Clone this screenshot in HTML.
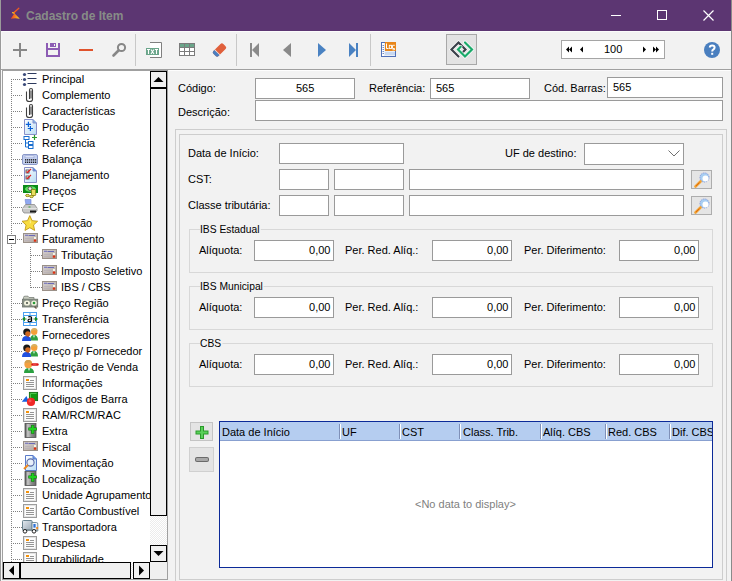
<!DOCTYPE html>
<html><head><meta charset="utf-8">
<style>
html,body{margin:0;padding:0;width:732px;height:581px;overflow:hidden;background:#f2f2f2;}
body{position:relative;font-family:"Liberation Sans",sans-serif;font-size:11px;color:#000;}
.a{position:absolute;}
.t{position:absolute;white-space:nowrap;font-size:11px;line-height:13px;}
.box{position:absolute;box-sizing:border-box;background:#fff;border:1px solid #9a9a9a;}
.gl{position:absolute;box-sizing:border-box;border:1px solid #d8d8d8;}
svg{position:absolute;overflow:visible;}
</style></head><body>

<!-- title bar -->
<div class="a" style="left:0;top:0;width:732px;height:31px;background:#5c3672;"></div>
<div class="a" style="left:0;top:0;width:1px;height:581px;background:#9a9a9a;"></div>
<div class="a" style="left:731px;top:0;width:1px;height:581px;background:#8a8a8a;"></div>
<svg style="left:0;top:0" width="40" height="31">
  <defs><linearGradient id="tg" gradientUnits="userSpaceOnUse" x1="12" y1="16" x2="19" y2="17"><stop offset="0" stop-color="#f04a20"/><stop offset="1" stop-color="#f8c420"/></linearGradient></defs>
  <path d="M19 8 L13.2 12.2 L12.6 12.8 L14.2 13.4 L10.8 18.8 Q15 17.6 19.8 18.8 L15.4 14.2 L13.9 12.8 Z" fill="url(#tg)"/>
  <path d="M18.8 8.3 L14.2 12.6" stroke="#f05a20" stroke-width="1.3" stroke-linecap="round"/>
  <path d="M12.6 12.6 L14 13.2" stroke="#f8c020" stroke-width="1.2" stroke-linecap="round"/>
</svg>
<div class="t" style="left:26px;top:10px;font-size:12px;font-weight:bold;color:#878c87;">Cadastro de Item</div>
<div class="a" style="left:611px;top:15px;width:10px;height:1px;background:#fff;"></div>
<div class="a" style="left:657px;top:10px;width:10px;height:10px;box-sizing:border-box;border:1px solid #fff;"></div>
<svg style="left:0;top:0" width="732" height="31">
  <path d="M703.5 10.5 L713.5 20.5 M713.5 10.5 L703.5 20.5" stroke="#fff" stroke-width="1.2"/>
</svg>

<!-- toolbar -->
<div class="a" style="left:1px;top:31px;width:730px;height:1px;background:#fbfbfb;"></div>
<div class="a" style="left:1px;top:69px;width:730px;height:1px;background:#a0a0a0;"></div><div class="a" style="left:1px;top:70px;width:730px;height:1px;background:#fdfdfd;"></div><div class="a" style="left:1px;top:31px;width:1px;height:38px;background:#f8f8f8;"></div><div class="a" style="left:1px;top:71px;width:1px;height:510px;background:#f8f8f8;"></div>
<svg style="left:0;top:0" width="732" height="70">
  <!-- plus -->
  <path d="M13 50 H27 M20 43 V57" stroke="#878787" stroke-width="2"/>
  <!-- save -->
  <rect x="46" y="43" width="2" height="14" fill="#8c5cb4"/>
  <rect x="58" y="43" width="2" height="14" fill="#8c5cb4"/>
  <rect x="46" y="48" width="14" height="2" fill="#8c5cb4"/>
  <rect x="46" y="55" width="14" height="2" fill="#8c5cb4"/>
  <rect x="50" y="43" width="6" height="4" fill="#8c5cb4"/>
  <rect x="54" y="44" width="1" height="2" fill="#f4f4f4"/>
  <!-- minus -->
  <rect x="79" y="49" width="14" height="2" fill="#e0532c"/>
  <!-- search -->
  <circle cx="121.5" cy="47.5" r="3.6" fill="none" stroke="#878787" stroke-width="2"/>
  <path d="M118.5 50.5 L113.5 55.5" stroke="#878787" stroke-width="2.6" stroke-linecap="round"/>
  <!-- sep -->
  <rect x="135" y="34" width="1" height="32" fill="#c8c8c8"/>
  <!-- TXT -->
  <path d="M150 42.5 H161.5 V57.5 H150" fill="#fff" stroke="#808080"/>
  <rect x="150" y="43" width="11" height="14" fill="#fff"/>
  <rect x="146" y="48" width="13" height="7" fill="#6aa58a"/>
  <path d="M147 49.5 H150 M148.5 49.5 V54 M151 49.5 L154 54 M154 49.5 L151 54 M155 49.5 H158 M156.5 49.5 V54" stroke="#fff" stroke-width="1.1"/>
  <!-- grid -->
  <rect x="179" y="43" width="16" height="13" fill="#7b7b7b"/>
  <rect x="180" y="44" width="4" height="3" fill="#6aa58a"/><rect x="185" y="44" width="4" height="3" fill="#6aa58a"/><rect x="190" y="44" width="4" height="3" fill="#6aa58a"/>
  <rect x="180" y="48" width="4" height="3" fill="#fff"/><rect x="185" y="48" width="4" height="3" fill="#fff"/><rect x="190" y="48" width="4" height="3" fill="#fff"/>
  <rect x="180" y="52" width="4" height="3" fill="#fff"/><rect x="185" y="52" width="4" height="3" fill="#fff"/><rect x="190" y="52" width="4" height="3" fill="#fff"/>
  <!-- eraser -->
  <g transform="translate(219.5,50) rotate(-45)">
    <rect x="-7" y="-3.6" width="14" height="7.2" rx="2" fill="#e0603c"/>
    <path d="M-7 -1.6 Q-7 -3.6 -5 -3.6 H-3.5 V3.6 H-5 Q-7 3.6 -7 1.6 Z" fill="#4a7fc0"/>
    <rect x="-3.5" y="-3.6" width="0.7" height="7.2" fill="#f2f2f2"/>
  </g>
  <!-- sep -->
  <rect x="236" y="34" width="1" height="32" fill="#c8c8c8"/>
  <!-- nav -->
  <rect x="250" y="43" width="2" height="14" fill="#8a8a8a"/>
  <path d="M259 43 V57 L252 50 Z" fill="#8a8a8a"/>
  <path d="M291 43 V57 L283 50 Z" fill="#8a8a8a"/>
  <path d="M318 43 V57 L326 50 Z" fill="#4a82c2"/>
  <path d="M349 43 V57 L356 50 Z" fill="#4a82c2"/>
  <rect x="356" y="43" width="2" height="14" fill="#4a82c2"/>
  <!-- sep -->
  <rect x="370" y="34" width="1" height="32" fill="#c8c8c8"/>
  <!-- log -->
  <rect x="381.5" y="42.5" width="14" height="14" fill="#e8eef8" stroke="#5070b8"/>
  <rect x="382" y="43" width="2" height="13" fill="#fff"/>
  <path d="M382.5 45.5 H384 M382.5 47.5 H384 M382.5 49.5 H384 M382.5 51.5 H384 M382.5 53.5 H384" stroke="#5070b8" stroke-width="0.8"/>
  <rect x="385" y="52" width="10" height="3" fill="#c8d8f0"/>
  <rect x="385" y="42" width="11" height="9" fill="#e8861a"/>
  <path d="M386.5 43.5 V48.5 H388.5" fill="none" stroke="#fff" stroke-width="1"/>
  <rect x="389.3" y="45.3" width="2.2" height="3.2" fill="none" stroke="#fff" stroke-width="0.9"/>
  <path d="M394.8 45.3 H392.5 V48.5 H394.5 V49.8 H392.5" fill="none" stroke="#fff" stroke-width="0.9"/>
  <!-- pressed button -->
  <rect x="446.5" y="34.5" width="30" height="30" fill="#e3e3e3" stroke="#a8a8a8"/>
  <path d="M462.8 52.2 L465.5 49.5 L458.5 42.5 L451.5 49.5 L458.5 56.5" fill="none" stroke="#fff" stroke-width="3.6" stroke-linecap="round" opacity="0.9"/>
  <path d="M462.8 52.2 L465.5 49.5 L458.5 42.5 L451.5 49.5 L458.5 56.5" fill="none" stroke="#3b404a" stroke-width="2.2" stroke-linecap="round"/>
  <path d="M460.7 46.8 L458 49.5 L465 56.5 L472 49.5 L465 42.5" fill="none" stroke="#fff" stroke-width="3.6" stroke-linecap="round" opacity="0.9"/>
  <path d="M460.7 46.8 L458 49.5 L465 56.5 L472 49.5 L465 42.5" fill="none" stroke="#1aaa6a" stroke-width="2.2" stroke-linecap="round"/>
  <!-- record nav -->
  <rect x="561.5" y="40.5" width="103" height="18" fill="#fff" stroke="#a5a5a5"/>
  <path d="M566 49.5 L569 46.5 V52.5 Z M569 49.5 L572 46.5 V52.5 Z" fill="#000"/>
  <path d="M580 49.5 L583 46.5 V52.5 Z" fill="#000"/>
  <path d="M646 49.5 L643 46.5 V52.5 Z" fill="#000"/>
  <path d="M656 49.5 L653 46.5 V52.5 Z M659 49.5 L656 46.5 V52.5 Z" fill="#000"/>
  <!-- help -->
  <circle cx="712" cy="50" r="8" fill="#4a7fbf"/>
  <path d="M709.8 47.6 Q709.8 45.6 712.2 45.6 Q714.6 45.6 714.6 47.6 Q714.6 48.9 713.2 49.6 Q712.2 50.1 712.2 51.6" fill="none" stroke="#fff" stroke-width="2"/>
  <rect x="711.2" y="52.8" width="2" height="2" fill="#fff"/>
</svg>
<div class="t" style="left:604px;top:43px;">100</div>

<!-- tree panel -->
<div class="a" style="left:2px;top:70px;width:166px;height:510px;box-sizing:border-box;border:1px solid #a0a0a0;background:#fff;"></div>
<div class="a" style="left:3px;top:71px;width:147px;height:491px;overflow:hidden;">
<svg style="left:0;top:0" width="147" height="500">
<rect x="8" y="8" width="1" height="1" fill="#808080"/><rect x="8" y="10" width="1" height="1" fill="#808080"/><rect x="8" y="12" width="1" height="1" fill="#808080"/><rect x="8" y="14" width="1" height="1" fill="#808080"/><rect x="8" y="16" width="1" height="1" fill="#808080"/><rect x="8" y="18" width="1" height="1" fill="#808080"/><rect x="8" y="20" width="1" height="1" fill="#808080"/><rect x="8" y="22" width="1" height="1" fill="#808080"/><rect x="8" y="24" width="1" height="1" fill="#808080"/><rect x="8" y="26" width="1" height="1" fill="#808080"/><rect x="8" y="28" width="1" height="1" fill="#808080"/><rect x="8" y="30" width="1" height="1" fill="#808080"/><rect x="8" y="32" width="1" height="1" fill="#808080"/><rect x="8" y="34" width="1" height="1" fill="#808080"/><rect x="8" y="36" width="1" height="1" fill="#808080"/><rect x="8" y="38" width="1" height="1" fill="#808080"/><rect x="8" y="40" width="1" height="1" fill="#808080"/><rect x="8" y="42" width="1" height="1" fill="#808080"/><rect x="8" y="44" width="1" height="1" fill="#808080"/><rect x="8" y="46" width="1" height="1" fill="#808080"/><rect x="8" y="48" width="1" height="1" fill="#808080"/><rect x="8" y="50" width="1" height="1" fill="#808080"/><rect x="8" y="52" width="1" height="1" fill="#808080"/><rect x="8" y="54" width="1" height="1" fill="#808080"/><rect x="8" y="56" width="1" height="1" fill="#808080"/><rect x="8" y="58" width="1" height="1" fill="#808080"/><rect x="8" y="60" width="1" height="1" fill="#808080"/><rect x="8" y="62" width="1" height="1" fill="#808080"/><rect x="8" y="64" width="1" height="1" fill="#808080"/><rect x="8" y="66" width="1" height="1" fill="#808080"/><rect x="8" y="68" width="1" height="1" fill="#808080"/><rect x="8" y="70" width="1" height="1" fill="#808080"/><rect x="8" y="72" width="1" height="1" fill="#808080"/><rect x="8" y="74" width="1" height="1" fill="#808080"/><rect x="8" y="76" width="1" height="1" fill="#808080"/><rect x="8" y="78" width="1" height="1" fill="#808080"/><rect x="8" y="80" width="1" height="1" fill="#808080"/><rect x="8" y="82" width="1" height="1" fill="#808080"/><rect x="8" y="84" width="1" height="1" fill="#808080"/><rect x="8" y="86" width="1" height="1" fill="#808080"/><rect x="8" y="88" width="1" height="1" fill="#808080"/><rect x="8" y="90" width="1" height="1" fill="#808080"/><rect x="8" y="92" width="1" height="1" fill="#808080"/><rect x="8" y="94" width="1" height="1" fill="#808080"/><rect x="8" y="96" width="1" height="1" fill="#808080"/><rect x="8" y="98" width="1" height="1" fill="#808080"/><rect x="8" y="100" width="1" height="1" fill="#808080"/><rect x="8" y="102" width="1" height="1" fill="#808080"/><rect x="8" y="104" width="1" height="1" fill="#808080"/><rect x="8" y="106" width="1" height="1" fill="#808080"/><rect x="8" y="108" width="1" height="1" fill="#808080"/><rect x="8" y="110" width="1" height="1" fill="#808080"/><rect x="8" y="112" width="1" height="1" fill="#808080"/><rect x="8" y="114" width="1" height="1" fill="#808080"/><rect x="8" y="116" width="1" height="1" fill="#808080"/><rect x="8" y="118" width="1" height="1" fill="#808080"/><rect x="8" y="120" width="1" height="1" fill="#808080"/><rect x="8" y="122" width="1" height="1" fill="#808080"/><rect x="8" y="124" width="1" height="1" fill="#808080"/><rect x="8" y="126" width="1" height="1" fill="#808080"/><rect x="8" y="128" width="1" height="1" fill="#808080"/><rect x="8" y="130" width="1" height="1" fill="#808080"/><rect x="8" y="132" width="1" height="1" fill="#808080"/><rect x="8" y="134" width="1" height="1" fill="#808080"/><rect x="8" y="136" width="1" height="1" fill="#808080"/><rect x="8" y="138" width="1" height="1" fill="#808080"/><rect x="8" y="140" width="1" height="1" fill="#808080"/><rect x="8" y="142" width="1" height="1" fill="#808080"/><rect x="8" y="144" width="1" height="1" fill="#808080"/><rect x="8" y="146" width="1" height="1" fill="#808080"/><rect x="8" y="148" width="1" height="1" fill="#808080"/><rect x="8" y="150" width="1" height="1" fill="#808080"/><rect x="8" y="152" width="1" height="1" fill="#808080"/><rect x="8" y="154" width="1" height="1" fill="#808080"/><rect x="8" y="156" width="1" height="1" fill="#808080"/><rect x="8" y="158" width="1" height="1" fill="#808080"/><rect x="8" y="160" width="1" height="1" fill="#808080"/><rect x="8" y="162" width="1" height="1" fill="#808080"/><rect x="8" y="164" width="1" height="1" fill="#808080"/><rect x="8" y="166" width="1" height="1" fill="#808080"/><rect x="8" y="168" width="1" height="1" fill="#808080"/><rect x="8" y="170" width="1" height="1" fill="#808080"/><rect x="8" y="172" width="1" height="1" fill="#808080"/><rect x="8" y="174" width="1" height="1" fill="#808080"/><rect x="8" y="176" width="1" height="1" fill="#808080"/><rect x="8" y="178" width="1" height="1" fill="#808080"/><rect x="8" y="180" width="1" height="1" fill="#808080"/><rect x="8" y="182" width="1" height="1" fill="#808080"/><rect x="8" y="184" width="1" height="1" fill="#808080"/><rect x="8" y="186" width="1" height="1" fill="#808080"/><rect x="8" y="188" width="1" height="1" fill="#808080"/><rect x="8" y="190" width="1" height="1" fill="#808080"/><rect x="8" y="192" width="1" height="1" fill="#808080"/><rect x="8" y="194" width="1" height="1" fill="#808080"/><rect x="8" y="196" width="1" height="1" fill="#808080"/><rect x="8" y="198" width="1" height="1" fill="#808080"/><rect x="8" y="200" width="1" height="1" fill="#808080"/><rect x="8" y="202" width="1" height="1" fill="#808080"/><rect x="8" y="204" width="1" height="1" fill="#808080"/><rect x="8" y="206" width="1" height="1" fill="#808080"/><rect x="8" y="208" width="1" height="1" fill="#808080"/><rect x="8" y="210" width="1" height="1" fill="#808080"/><rect x="8" y="212" width="1" height="1" fill="#808080"/><rect x="8" y="214" width="1" height="1" fill="#808080"/><rect x="8" y="216" width="1" height="1" fill="#808080"/><rect x="8" y="218" width="1" height="1" fill="#808080"/><rect x="8" y="220" width="1" height="1" fill="#808080"/><rect x="8" y="222" width="1" height="1" fill="#808080"/><rect x="8" y="224" width="1" height="1" fill="#808080"/><rect x="8" y="226" width="1" height="1" fill="#808080"/><rect x="8" y="228" width="1" height="1" fill="#808080"/><rect x="8" y="230" width="1" height="1" fill="#808080"/><rect x="8" y="232" width="1" height="1" fill="#808080"/><rect x="8" y="234" width="1" height="1" fill="#808080"/><rect x="8" y="236" width="1" height="1" fill="#808080"/><rect x="8" y="238" width="1" height="1" fill="#808080"/><rect x="8" y="240" width="1" height="1" fill="#808080"/><rect x="8" y="242" width="1" height="1" fill="#808080"/><rect x="8" y="244" width="1" height="1" fill="#808080"/><rect x="8" y="246" width="1" height="1" fill="#808080"/><rect x="8" y="248" width="1" height="1" fill="#808080"/><rect x="8" y="250" width="1" height="1" fill="#808080"/><rect x="8" y="252" width="1" height="1" fill="#808080"/><rect x="8" y="254" width="1" height="1" fill="#808080"/><rect x="8" y="256" width="1" height="1" fill="#808080"/><rect x="8" y="258" width="1" height="1" fill="#808080"/><rect x="8" y="260" width="1" height="1" fill="#808080"/><rect x="8" y="262" width="1" height="1" fill="#808080"/><rect x="8" y="264" width="1" height="1" fill="#808080"/><rect x="8" y="266" width="1" height="1" fill="#808080"/><rect x="8" y="268" width="1" height="1" fill="#808080"/><rect x="8" y="270" width="1" height="1" fill="#808080"/><rect x="8" y="272" width="1" height="1" fill="#808080"/><rect x="8" y="274" width="1" height="1" fill="#808080"/><rect x="8" y="276" width="1" height="1" fill="#808080"/><rect x="8" y="278" width="1" height="1" fill="#808080"/><rect x="8" y="280" width="1" height="1" fill="#808080"/><rect x="8" y="282" width="1" height="1" fill="#808080"/><rect x="8" y="284" width="1" height="1" fill="#808080"/><rect x="8" y="286" width="1" height="1" fill="#808080"/><rect x="8" y="288" width="1" height="1" fill="#808080"/><rect x="8" y="290" width="1" height="1" fill="#808080"/><rect x="8" y="292" width="1" height="1" fill="#808080"/><rect x="8" y="294" width="1" height="1" fill="#808080"/><rect x="8" y="296" width="1" height="1" fill="#808080"/><rect x="8" y="298" width="1" height="1" fill="#808080"/><rect x="8" y="300" width="1" height="1" fill="#808080"/><rect x="8" y="302" width="1" height="1" fill="#808080"/><rect x="8" y="304" width="1" height="1" fill="#808080"/><rect x="8" y="306" width="1" height="1" fill="#808080"/><rect x="8" y="308" width="1" height="1" fill="#808080"/><rect x="8" y="310" width="1" height="1" fill="#808080"/><rect x="8" y="312" width="1" height="1" fill="#808080"/><rect x="8" y="314" width="1" height="1" fill="#808080"/><rect x="8" y="316" width="1" height="1" fill="#808080"/><rect x="8" y="318" width="1" height="1" fill="#808080"/><rect x="8" y="320" width="1" height="1" fill="#808080"/><rect x="8" y="322" width="1" height="1" fill="#808080"/><rect x="8" y="324" width="1" height="1" fill="#808080"/><rect x="8" y="326" width="1" height="1" fill="#808080"/><rect x="8" y="328" width="1" height="1" fill="#808080"/><rect x="8" y="330" width="1" height="1" fill="#808080"/><rect x="8" y="332" width="1" height="1" fill="#808080"/><rect x="8" y="334" width="1" height="1" fill="#808080"/><rect x="8" y="336" width="1" height="1" fill="#808080"/><rect x="8" y="338" width="1" height="1" fill="#808080"/><rect x="8" y="340" width="1" height="1" fill="#808080"/><rect x="8" y="342" width="1" height="1" fill="#808080"/><rect x="8" y="344" width="1" height="1" fill="#808080"/><rect x="8" y="346" width="1" height="1" fill="#808080"/><rect x="8" y="348" width="1" height="1" fill="#808080"/><rect x="8" y="350" width="1" height="1" fill="#808080"/><rect x="8" y="352" width="1" height="1" fill="#808080"/><rect x="8" y="354" width="1" height="1" fill="#808080"/><rect x="8" y="356" width="1" height="1" fill="#808080"/><rect x="8" y="358" width="1" height="1" fill="#808080"/><rect x="8" y="360" width="1" height="1" fill="#808080"/><rect x="8" y="362" width="1" height="1" fill="#808080"/><rect x="8" y="364" width="1" height="1" fill="#808080"/><rect x="8" y="366" width="1" height="1" fill="#808080"/><rect x="8" y="368" width="1" height="1" fill="#808080"/><rect x="8" y="370" width="1" height="1" fill="#808080"/><rect x="8" y="372" width="1" height="1" fill="#808080"/><rect x="8" y="374" width="1" height="1" fill="#808080"/><rect x="8" y="376" width="1" height="1" fill="#808080"/><rect x="8" y="378" width="1" height="1" fill="#808080"/><rect x="8" y="380" width="1" height="1" fill="#808080"/><rect x="8" y="382" width="1" height="1" fill="#808080"/><rect x="8" y="384" width="1" height="1" fill="#808080"/><rect x="8" y="386" width="1" height="1" fill="#808080"/><rect x="8" y="388" width="1" height="1" fill="#808080"/><rect x="8" y="390" width="1" height="1" fill="#808080"/><rect x="8" y="392" width="1" height="1" fill="#808080"/><rect x="8" y="394" width="1" height="1" fill="#808080"/><rect x="8" y="396" width="1" height="1" fill="#808080"/><rect x="8" y="398" width="1" height="1" fill="#808080"/><rect x="8" y="400" width="1" height="1" fill="#808080"/><rect x="8" y="402" width="1" height="1" fill="#808080"/><rect x="8" y="404" width="1" height="1" fill="#808080"/><rect x="8" y="406" width="1" height="1" fill="#808080"/><rect x="8" y="408" width="1" height="1" fill="#808080"/><rect x="8" y="410" width="1" height="1" fill="#808080"/><rect x="8" y="412" width="1" height="1" fill="#808080"/><rect x="8" y="414" width="1" height="1" fill="#808080"/><rect x="8" y="416" width="1" height="1" fill="#808080"/><rect x="8" y="418" width="1" height="1" fill="#808080"/><rect x="8" y="420" width="1" height="1" fill="#808080"/><rect x="8" y="422" width="1" height="1" fill="#808080"/><rect x="8" y="424" width="1" height="1" fill="#808080"/><rect x="8" y="426" width="1" height="1" fill="#808080"/><rect x="8" y="428" width="1" height="1" fill="#808080"/><rect x="8" y="430" width="1" height="1" fill="#808080"/><rect x="8" y="432" width="1" height="1" fill="#808080"/><rect x="8" y="434" width="1" height="1" fill="#808080"/><rect x="8" y="436" width="1" height="1" fill="#808080"/><rect x="8" y="438" width="1" height="1" fill="#808080"/><rect x="8" y="440" width="1" height="1" fill="#808080"/><rect x="8" y="442" width="1" height="1" fill="#808080"/><rect x="8" y="444" width="1" height="1" fill="#808080"/><rect x="8" y="446" width="1" height="1" fill="#808080"/><rect x="8" y="448" width="1" height="1" fill="#808080"/><rect x="8" y="450" width="1" height="1" fill="#808080"/><rect x="8" y="452" width="1" height="1" fill="#808080"/><rect x="8" y="454" width="1" height="1" fill="#808080"/><rect x="8" y="456" width="1" height="1" fill="#808080"/><rect x="8" y="458" width="1" height="1" fill="#808080"/><rect x="8" y="460" width="1" height="1" fill="#808080"/><rect x="8" y="462" width="1" height="1" fill="#808080"/><rect x="8" y="464" width="1" height="1" fill="#808080"/><rect x="8" y="466" width="1" height="1" fill="#808080"/><rect x="8" y="468" width="1" height="1" fill="#808080"/><rect x="8" y="470" width="1" height="1" fill="#808080"/><rect x="8" y="472" width="1" height="1" fill="#808080"/><rect x="8" y="474" width="1" height="1" fill="#808080"/><rect x="8" y="476" width="1" height="1" fill="#808080"/><rect x="8" y="478" width="1" height="1" fill="#808080"/><rect x="8" y="480" width="1" height="1" fill="#808080"/><rect x="8" y="482" width="1" height="1" fill="#808080"/><rect x="8" y="484" width="1" height="1" fill="#808080"/><rect x="8" y="486" width="1" height="1" fill="#808080"/><rect x="8" y="488" width="1" height="1" fill="#808080"/><rect x="8" y="490" width="1" height="1" fill="#808080"/>
<rect x="10" y="8" width="1" height="1" fill="#808080"/><rect x="12" y="8" width="1" height="1" fill="#808080"/><rect x="14" y="8" width="1" height="1" fill="#808080"/><rect x="16" y="8" width="1" height="1" fill="#808080"/><rect x="18" y="8" width="1" height="1" fill="#808080"/>
<rect x="10" y="24" width="1" height="1" fill="#808080"/><rect x="12" y="24" width="1" height="1" fill="#808080"/><rect x="14" y="24" width="1" height="1" fill="#808080"/><rect x="16" y="24" width="1" height="1" fill="#808080"/><rect x="18" y="24" width="1" height="1" fill="#808080"/>
<rect x="10" y="40" width="1" height="1" fill="#808080"/><rect x="12" y="40" width="1" height="1" fill="#808080"/><rect x="14" y="40" width="1" height="1" fill="#808080"/><rect x="16" y="40" width="1" height="1" fill="#808080"/><rect x="18" y="40" width="1" height="1" fill="#808080"/>
<rect x="10" y="56" width="1" height="1" fill="#808080"/><rect x="12" y="56" width="1" height="1" fill="#808080"/><rect x="14" y="56" width="1" height="1" fill="#808080"/><rect x="16" y="56" width="1" height="1" fill="#808080"/><rect x="18" y="56" width="1" height="1" fill="#808080"/>
<rect x="10" y="72" width="1" height="1" fill="#808080"/><rect x="12" y="72" width="1" height="1" fill="#808080"/><rect x="14" y="72" width="1" height="1" fill="#808080"/><rect x="16" y="72" width="1" height="1" fill="#808080"/><rect x="18" y="72" width="1" height="1" fill="#808080"/>
<rect x="10" y="88" width="1" height="1" fill="#808080"/><rect x="12" y="88" width="1" height="1" fill="#808080"/><rect x="14" y="88" width="1" height="1" fill="#808080"/><rect x="16" y="88" width="1" height="1" fill="#808080"/><rect x="18" y="88" width="1" height="1" fill="#808080"/>
<rect x="10" y="104" width="1" height="1" fill="#808080"/><rect x="12" y="104" width="1" height="1" fill="#808080"/><rect x="14" y="104" width="1" height="1" fill="#808080"/><rect x="16" y="104" width="1" height="1" fill="#808080"/><rect x="18" y="104" width="1" height="1" fill="#808080"/>
<rect x="10" y="120" width="1" height="1" fill="#808080"/><rect x="12" y="120" width="1" height="1" fill="#808080"/><rect x="14" y="120" width="1" height="1" fill="#808080"/><rect x="16" y="120" width="1" height="1" fill="#808080"/><rect x="18" y="120" width="1" height="1" fill="#808080"/>
<rect x="10" y="136" width="1" height="1" fill="#808080"/><rect x="12" y="136" width="1" height="1" fill="#808080"/><rect x="14" y="136" width="1" height="1" fill="#808080"/><rect x="16" y="136" width="1" height="1" fill="#808080"/><rect x="18" y="136" width="1" height="1" fill="#808080"/>
<rect x="10" y="152" width="1" height="1" fill="#808080"/><rect x="12" y="152" width="1" height="1" fill="#808080"/><rect x="14" y="152" width="1" height="1" fill="#808080"/><rect x="16" y="152" width="1" height="1" fill="#808080"/><rect x="18" y="152" width="1" height="1" fill="#808080"/>
<rect x="14" y="168" width="1" height="1" fill="#808080"/><rect x="16" y="168" width="1" height="1" fill="#808080"/><rect x="18" y="168" width="1" height="1" fill="#808080"/>
<rect x="28" y="184" width="1" height="1" fill="#808080"/><rect x="30" y="184" width="1" height="1" fill="#808080"/><rect x="32" y="184" width="1" height="1" fill="#808080"/><rect x="34" y="184" width="1" height="1" fill="#808080"/><rect x="36" y="184" width="1" height="1" fill="#808080"/><rect x="38" y="184" width="1" height="1" fill="#808080"/>
<rect x="28" y="200" width="1" height="1" fill="#808080"/><rect x="30" y="200" width="1" height="1" fill="#808080"/><rect x="32" y="200" width="1" height="1" fill="#808080"/><rect x="34" y="200" width="1" height="1" fill="#808080"/><rect x="36" y="200" width="1" height="1" fill="#808080"/><rect x="38" y="200" width="1" height="1" fill="#808080"/>
<rect x="28" y="216" width="1" height="1" fill="#808080"/><rect x="30" y="216" width="1" height="1" fill="#808080"/><rect x="32" y="216" width="1" height="1" fill="#808080"/><rect x="34" y="216" width="1" height="1" fill="#808080"/><rect x="36" y="216" width="1" height="1" fill="#808080"/><rect x="38" y="216" width="1" height="1" fill="#808080"/>
<rect x="10" y="232" width="1" height="1" fill="#808080"/><rect x="12" y="232" width="1" height="1" fill="#808080"/><rect x="14" y="232" width="1" height="1" fill="#808080"/><rect x="16" y="232" width="1" height="1" fill="#808080"/><rect x="18" y="232" width="1" height="1" fill="#808080"/>
<rect x="10" y="248" width="1" height="1" fill="#808080"/><rect x="12" y="248" width="1" height="1" fill="#808080"/><rect x="14" y="248" width="1" height="1" fill="#808080"/><rect x="16" y="248" width="1" height="1" fill="#808080"/><rect x="18" y="248" width="1" height="1" fill="#808080"/>
<rect x="10" y="264" width="1" height="1" fill="#808080"/><rect x="12" y="264" width="1" height="1" fill="#808080"/><rect x="14" y="264" width="1" height="1" fill="#808080"/><rect x="16" y="264" width="1" height="1" fill="#808080"/><rect x="18" y="264" width="1" height="1" fill="#808080"/>
<rect x="10" y="280" width="1" height="1" fill="#808080"/><rect x="12" y="280" width="1" height="1" fill="#808080"/><rect x="14" y="280" width="1" height="1" fill="#808080"/><rect x="16" y="280" width="1" height="1" fill="#808080"/><rect x="18" y="280" width="1" height="1" fill="#808080"/>
<rect x="10" y="296" width="1" height="1" fill="#808080"/><rect x="12" y="296" width="1" height="1" fill="#808080"/><rect x="14" y="296" width="1" height="1" fill="#808080"/><rect x="16" y="296" width="1" height="1" fill="#808080"/><rect x="18" y="296" width="1" height="1" fill="#808080"/>
<rect x="10" y="312" width="1" height="1" fill="#808080"/><rect x="12" y="312" width="1" height="1" fill="#808080"/><rect x="14" y="312" width="1" height="1" fill="#808080"/><rect x="16" y="312" width="1" height="1" fill="#808080"/><rect x="18" y="312" width="1" height="1" fill="#808080"/>
<rect x="10" y="328" width="1" height="1" fill="#808080"/><rect x="12" y="328" width="1" height="1" fill="#808080"/><rect x="14" y="328" width="1" height="1" fill="#808080"/><rect x="16" y="328" width="1" height="1" fill="#808080"/><rect x="18" y="328" width="1" height="1" fill="#808080"/>
<rect x="10" y="344" width="1" height="1" fill="#808080"/><rect x="12" y="344" width="1" height="1" fill="#808080"/><rect x="14" y="344" width="1" height="1" fill="#808080"/><rect x="16" y="344" width="1" height="1" fill="#808080"/><rect x="18" y="344" width="1" height="1" fill="#808080"/>
<rect x="10" y="360" width="1" height="1" fill="#808080"/><rect x="12" y="360" width="1" height="1" fill="#808080"/><rect x="14" y="360" width="1" height="1" fill="#808080"/><rect x="16" y="360" width="1" height="1" fill="#808080"/><rect x="18" y="360" width="1" height="1" fill="#808080"/>
<rect x="10" y="376" width="1" height="1" fill="#808080"/><rect x="12" y="376" width="1" height="1" fill="#808080"/><rect x="14" y="376" width="1" height="1" fill="#808080"/><rect x="16" y="376" width="1" height="1" fill="#808080"/><rect x="18" y="376" width="1" height="1" fill="#808080"/>
<rect x="10" y="392" width="1" height="1" fill="#808080"/><rect x="12" y="392" width="1" height="1" fill="#808080"/><rect x="14" y="392" width="1" height="1" fill="#808080"/><rect x="16" y="392" width="1" height="1" fill="#808080"/><rect x="18" y="392" width="1" height="1" fill="#808080"/>
<rect x="10" y="408" width="1" height="1" fill="#808080"/><rect x="12" y="408" width="1" height="1" fill="#808080"/><rect x="14" y="408" width="1" height="1" fill="#808080"/><rect x="16" y="408" width="1" height="1" fill="#808080"/><rect x="18" y="408" width="1" height="1" fill="#808080"/>
<rect x="10" y="424" width="1" height="1" fill="#808080"/><rect x="12" y="424" width="1" height="1" fill="#808080"/><rect x="14" y="424" width="1" height="1" fill="#808080"/><rect x="16" y="424" width="1" height="1" fill="#808080"/><rect x="18" y="424" width="1" height="1" fill="#808080"/>
<rect x="10" y="440" width="1" height="1" fill="#808080"/><rect x="12" y="440" width="1" height="1" fill="#808080"/><rect x="14" y="440" width="1" height="1" fill="#808080"/><rect x="16" y="440" width="1" height="1" fill="#808080"/><rect x="18" y="440" width="1" height="1" fill="#808080"/>
<rect x="10" y="456" width="1" height="1" fill="#808080"/><rect x="12" y="456" width="1" height="1" fill="#808080"/><rect x="14" y="456" width="1" height="1" fill="#808080"/><rect x="16" y="456" width="1" height="1" fill="#808080"/><rect x="18" y="456" width="1" height="1" fill="#808080"/>
<rect x="10" y="472" width="1" height="1" fill="#808080"/><rect x="12" y="472" width="1" height="1" fill="#808080"/><rect x="14" y="472" width="1" height="1" fill="#808080"/><rect x="16" y="472" width="1" height="1" fill="#808080"/><rect x="18" y="472" width="1" height="1" fill="#808080"/>
<rect x="10" y="488" width="1" height="1" fill="#808080"/><rect x="12" y="488" width="1" height="1" fill="#808080"/><rect x="14" y="488" width="1" height="1" fill="#808080"/><rect x="16" y="488" width="1" height="1" fill="#808080"/><rect x="18" y="488" width="1" height="1" fill="#808080"/>
<rect x="27" y="176" width="1" height="1" fill="#808080"/><rect x="27" y="178" width="1" height="1" fill="#808080"/><rect x="27" y="180" width="1" height="1" fill="#808080"/><rect x="27" y="182" width="1" height="1" fill="#808080"/><rect x="27" y="184" width="1" height="1" fill="#808080"/><rect x="27" y="186" width="1" height="1" fill="#808080"/><rect x="27" y="188" width="1" height="1" fill="#808080"/><rect x="27" y="190" width="1" height="1" fill="#808080"/><rect x="27" y="192" width="1" height="1" fill="#808080"/><rect x="27" y="194" width="1" height="1" fill="#808080"/><rect x="27" y="196" width="1" height="1" fill="#808080"/><rect x="27" y="198" width="1" height="1" fill="#808080"/><rect x="27" y="200" width="1" height="1" fill="#808080"/><rect x="27" y="202" width="1" height="1" fill="#808080"/><rect x="27" y="204" width="1" height="1" fill="#808080"/><rect x="27" y="206" width="1" height="1" fill="#808080"/><rect x="27" y="208" width="1" height="1" fill="#808080"/><rect x="27" y="210" width="1" height="1" fill="#808080"/><rect x="27" y="212" width="1" height="1" fill="#808080"/><rect x="27" y="214" width="1" height="1" fill="#808080"/><rect x="27" y="216" width="1" height="1" fill="#808080"/>
<rect x="4.5" y="164.5" width="8" height="8" fill="#fff" stroke="#808080"/>
<rect x="6" y="168" width="5" height="1" fill="#000"/>
<g transform="translate(19,0)"><circle cx="2.5" cy="3.5" r="1.6" fill="#3a4a7a"/><circle cx="2.5" cy="8.5" r="1.6" fill="#3a4a7a"/><circle cx="2.5" cy="13.5" r="1.6" fill="#3a4a7a"/>
<path d="M5.5 2.5 H14.5 M5.5 7.5 H14.5 M5.5 12.5 H14.5" stroke="#2e3a5e" stroke-width="1"/></g>
<g transform="translate(19,16)"><path d="M4.5 4.5 V12.5 Q4.5 14.5 7.5 14.5 Q10.5 14.5 10.5 12.5 V3 Q10.5 1.5 9 1.5 Q7.5 1.5 7.5 3 V12 M9 3.5 V11.5" fill="none" stroke="#404040" stroke-width="1.1"/></g>
<g transform="translate(19,32)"><path d="M4.5 4.5 V12.5 Q4.5 14.5 7.5 14.5 Q10.5 14.5 10.5 12.5 V3 Q10.5 1.5 9 1.5 Q7.5 1.5 7.5 3 V12 M9 3.5 V11.5" fill="none" stroke="#404040" stroke-width="1.1"/></g>
<g transform="translate(19,48)"><defs><linearGradient id="pg" x1="0" y1="0" x2="1" y2="1"><stop offset="0" stop-color="#ffffff"/><stop offset="1" stop-color="#b8dcf4"/></linearGradient></defs><path d="M2.5 0.5 H11 L14.5 4 V15.5 H2.5 Z" fill="url(#pg)" stroke="#8890c8"/><path d="M11 0.5 V4 H14.5" fill="#7ab0e8" stroke="#8890c8"/>
<path d="M6.4 2.8 V8 M3.8 5.4 H9 M8.4 6.9 V12.1 M5.8 9.5 H11" stroke="#0a60d8" stroke-width="1.2"/></g>
<g transform="translate(19,64)"><path d="M3.5 4 V12 M3.5 8 H6.5 M3.5 12 H6.5" stroke="#1a6fd0"/><rect x="2" y="1.5" width="5" height="3" fill="#fff" stroke="#1a6fd0"/>
<rect x="6.5" y="6.5" width="4.5" height="3" fill="#fff" stroke="#1a6fd0"/><rect x="6.5" y="10.5" width="4.5" height="3" fill="#fff" stroke="#1a6fd0"/>
<path d="M12.5 0 V5 M10 2.5 H15" stroke="#2a9a2a" stroke-width="1.2"/></g>
<g transform="translate(19,80)"><rect x="0.5" y="3.5" width="15" height="10" rx="1.5" fill="#c4d0f0" stroke="#8a98c8"/><rect x="3" y="4.8" width="9" height="2" fill="#e4eafc" stroke="#98a4d0" stroke-width="0.6"/>
<rect x="3" y="8.2" width="1.3" height="1.3" fill="#101010"/><rect x="5" y="8.2" width="1.3" height="1.3" fill="#101010"/><rect x="7" y="8.2" width="1.3" height="1.3" fill="#101010"/><rect x="9" y="8.2" width="1.3" height="1.3" fill="#101010"/><rect x="11" y="8.2" width="1.3" height="1.3" fill="#101010"/><rect x="13" y="8.2" width="1.3" height="1.3" fill="#101010"/><rect x="3" y="10.6" width="1.3" height="1.3" fill="#101010"/><rect x="5" y="10.6" width="1.3" height="1.3" fill="#101010"/><rect x="7" y="10.6" width="1.3" height="1.3" fill="#101010"/><rect x="9" y="10.6" width="1.3" height="1.3" fill="#101010"/><rect x="11" y="10.6" width="1.3" height="1.3" fill="#101010"/><rect x="13" y="10.6" width="1.3" height="1.3" fill="#101010"/></g>
<g transform="translate(19,96)"><path d="M2.5 0.5 H11 L14.5 4 V15.5 H2.5 Z" fill="url(#pg)" stroke="#8890c8"/><path d="M11 0.5 V4 H14.5" fill="#4a80e0" stroke="#8890c8"/>
<rect x="4" y="3" width="3" height="3" fill="#fff" stroke="#444" stroke-width="0.8"/><rect x="4" y="9" width="3" height="3" fill="#fff" stroke="#444" stroke-width="0.8"/>
<path d="M4.5 4.5 L5.5 5.5 L9 2 M4.5 10.5 L5.5 11.5 L9 8" fill="none" stroke="#e02020" stroke-width="1.1"/></g>
<g transform="translate(19,112)"><rect x="1" y="2" width="15" height="8" fill="#0a8a1a"/><ellipse cx="8.5" cy="6" rx="5.5" ry="2.8" fill="#60e060"/><circle cx="8" cy="5.6" r="1.9" fill="#f0f0e0" stroke="#404040" stroke-width="0.8"/>
<rect x="9.5" y="6.5" width="4.2" height="6" rx="0.8" fill="#e8e060" stroke="#8a8010" stroke-width="0.9"/><ellipse cx="5.5" cy="12.5" rx="1.9" ry="1.1" fill="#e8e060" stroke="#8a8010" stroke-width="0.9"/><ellipse cx="9.5" cy="13.5" rx="1.9" ry="1.1" fill="#e8e060" stroke="#8a8010" stroke-width="0.9"/></g>
<g transform="translate(19,128)"><path d="M3 0.5 H9 V5.5 H4 Z" fill="#90a8f0" stroke="#6a80d0" stroke-width="0.6"/>
<path d="M0.5 9.5 L3.5 5.5 H12.5 L15 9 V12 L13 14 H2 L0.5 12 Z" fill="#c8c8c8" stroke="#808080" stroke-width="0.7"/>
<path d="M0.5 9.5 H15" stroke="#e8e8e8" stroke-width="0.8"/><rect x="8" y="11.5" width="6" height="2" fill="#181818"/><rect x="6.5" y="7.5" width="2" height="1" fill="#3aa03a"/></g>
<g transform="translate(19,144)"><path d="M7.80 0.60 L10.09 5.64 L15.60 6.27 L11.51 10.01 L12.62 15.43 L7.80 12.70 L2.98 15.43 L4.09 10.01 L0.00 6.27 L5.51 5.64 Z" fill="#f8dc40" stroke="#c09818" stroke-width="0.9" stroke-linejoin="round"/><path d="M7.8 3 L9 7.5 L7.8 9 Z" fill="#fff8c0" opacity="0.7"/></g>
<g transform="translate(19,160)"><defs><linearGradient id="cg" x1="0" y1="0" x2="1" y2="1"><stop offset="0" stop-color="#d8d4d8"/><stop offset="0.5" stop-color="#c4bcb8"/><stop offset="1" stop-color="#a8a098"/></linearGradient></defs>
<rect x="1" y="2" width="15" height="10" fill="url(#cg)"/><rect x="1.5" y="2.5" width="14" height="9" fill="none" stroke="#9a9088" stroke-width="1"/>
<path d="M3 4.3 H6 M6.5 4.5 H13" stroke="#6a6ab8" stroke-width="1.1"/><path d="M3 7.5 H10 M3 9.5 H9" stroke="#b8b0b8" stroke-width="0.7"/><rect x="12" y="6" width="2" height="2" fill="#f4f4e8"/><rect x="11.8" y="8.5" width="2.5" height="2.2" fill="#e03010"/></g>
<g transform="translate(38,176)"><defs><linearGradient id="cg" x1="0" y1="0" x2="1" y2="1"><stop offset="0" stop-color="#d8d4d8"/><stop offset="0.5" stop-color="#c4bcb8"/><stop offset="1" stop-color="#a8a098"/></linearGradient></defs>
<rect x="1" y="2" width="15" height="10" fill="url(#cg)"/><rect x="1.5" y="2.5" width="14" height="9" fill="none" stroke="#9a9088" stroke-width="1"/>
<path d="M3 4.3 H6 M6.5 4.5 H13" stroke="#6a6ab8" stroke-width="1.1"/><path d="M3 7.5 H10 M3 9.5 H9" stroke="#b8b0b8" stroke-width="0.7"/><rect x="12" y="6" width="2" height="2" fill="#f4f4e8"/><rect x="11.8" y="8.5" width="2.5" height="2.2" fill="#e03010"/></g>
<g transform="translate(38,192)"><defs><linearGradient id="cg" x1="0" y1="0" x2="1" y2="1"><stop offset="0" stop-color="#d8d4d8"/><stop offset="0.5" stop-color="#c4bcb8"/><stop offset="1" stop-color="#a8a098"/></linearGradient></defs>
<rect x="1" y="2" width="15" height="10" fill="url(#cg)"/><rect x="1.5" y="2.5" width="14" height="9" fill="none" stroke="#9a9088" stroke-width="1"/>
<path d="M3 4.3 H6 M6.5 4.5 H13" stroke="#6a6ab8" stroke-width="1.1"/><path d="M3 7.5 H10 M3 9.5 H9" stroke="#b8b0b8" stroke-width="0.7"/><rect x="12" y="6" width="2" height="2" fill="#f4f4e8"/><rect x="11.8" y="8.5" width="2.5" height="2.2" fill="#e03010"/></g>
<g transform="translate(38,208)"><defs><linearGradient id="cg" x1="0" y1="0" x2="1" y2="1"><stop offset="0" stop-color="#d8d4d8"/><stop offset="0.5" stop-color="#c4bcb8"/><stop offset="1" stop-color="#a8a098"/></linearGradient></defs>
<rect x="1" y="2" width="15" height="10" fill="url(#cg)"/><rect x="1.5" y="2.5" width="14" height="9" fill="none" stroke="#9a9088" stroke-width="1"/>
<path d="M3 4.3 H6 M6.5 4.5 H13" stroke="#6a6ab8" stroke-width="1.1"/><path d="M3 7.5 H10 M3 9.5 H9" stroke="#b8b0b8" stroke-width="0.7"/><rect x="12" y="6" width="2" height="2" fill="#f4f4e8"/><rect x="11.8" y="8.5" width="2.5" height="2.2" fill="#e03010"/></g>
<g transform="translate(19,224)"><path d="M1.5 4 V2.5 Q1.5 1.2 3 1.2 H6 L7 2.5 H12 V4" fill="#c8ccc0" stroke="#7a8078" stroke-width="0.8"/><rect x="0.5" y="4.2" width="15.2" height="7.8" fill="#8a9288" stroke="#6a7068" stroke-width="0.8"/>
<ellipse cx="5" cy="8" rx="3" ry="2.6" fill="#f4f4e0"/><circle cx="5" cy="8" r="1.1" fill="#505850"/><ellipse cx="12" cy="8" rx="2.8" ry="2.6" fill="#f4f4e0"/><circle cx="12" cy="8" r="1.3" fill="#2a9a3a"/>
<path d="M12.5 11.5 L14.5 13.5" stroke="#6a5a4a" stroke-width="1.4"/></g>
<g transform="translate(19,240)"><rect x="1.5" y="1.5" width="13" height="13" fill="#fff" stroke="#4aa0f0" stroke-width="1"/><path d="M1 4.5 H15 M1 11.5 H15 M8 1 V4.5 M8 11.5 V15" stroke="#4aa0f0"/>
<path d="M0 8 L3 5.5 V10.5 Z M16 8 L13 5.5 V10.5 Z" fill="#1a8a2a"/><path d="M2 8 H4.5 M11.5 8 H14" stroke="#1a8a2a" stroke-width="1.2"/>
<path d="M6.2 6 Q7.8 5.2 9.2 6 Q9.6 6.4 9.6 7 V10.8 M9.4 8 Q6 7.8 6 9.5 Q6 10.8 7.4 10.8 Q8.8 10.8 9.4 9.6" fill="none" stroke="#000" stroke-width="1.1"/></g>
<g transform="translate(19,256)"><path d="M8 13.5 Q8 8 12 8 Q16 8 16 13.5 Z" fill="#30a040"/><path d="M11 8.5 L12 11 L13 8.5 Z" fill="#e8f8e8"/><circle cx="12.2" cy="4.8" r="3.2" fill="#f4a038"/><path d="M9 4 Q9.5 0.8 12.5 1 Q15.5 1 15.5 4 Q13 2.5 9 4 Z" fill="#d8b060"/>
<path d="M0 14 Q0 9 4.5 9 Q9 9 9 14 Z" fill="#2050e0"/><circle cx="4.8" cy="5" r="3.6" fill="#181818"/><circle cx="5.8" cy="6.8" r="2.6" fill="#d06820"/><path d="M5 9.5 L6 10.5 L7 9.5 Z" fill="#a02010"/></g>
<g transform="translate(19,272)"><path d="M8 13.5 Q8 8 12 8 Q16 8 16 13.5 Z" fill="#30a040"/><path d="M11 8.5 L12 11 L13 8.5 Z" fill="#e8f8e8"/><circle cx="12.2" cy="4.8" r="3.2" fill="#f4a038"/><path d="M9 4 Q9.5 0.8 12.5 1 Q15.5 1 15.5 4 Q13 2.5 9 4 Z" fill="#d8b060"/>
<path d="M0 14 Q0 9 4.5 9 Q9 9 9 14 Z" fill="#2050e0"/><circle cx="4.8" cy="5" r="3.6" fill="#181818"/><circle cx="5.8" cy="6.8" r="2.6" fill="#d06820"/><path d="M5 9.5 L6 10.5 L7 9.5 Z" fill="#a02010"/></g>
<g transform="translate(19,288)"><path d="M2 14 Q2 9 7 9 Q12 9 12 14 Z" fill="#2aa040"/><path d="M6 9.2 L7 12 L8 9.2 Z" fill="#f4fff4"/>
<ellipse cx="6.3" cy="5.2" rx="3.9" ry="4.1" fill="#f4a040"/><path d="M2.6 4.5 Q2.8 1 6.3 1 Q9.8 1 10 4.5 Q7 2.6 2.6 4.5 Z" fill="#d0a050"/>
<path d="M10.5 5.5 H15.5" stroke="#d81818" stroke-width="2.4" stroke-linecap="round"/><path d="M11 5.3 H14.5" stroke="#ff6060" stroke-width="0.7"/></g>
<g transform="translate(19,304)"><rect x="1.5" y="1.5" width="13" height="13" fill="#fcfcfc" stroke="#9c9c9c"/><rect x="2.5" y="2.5" width="11" height="11" fill="none" stroke="#e4e4e4" stroke-width="1"/><rect x="4" y="4" width="3" height="2" fill="#f5920a"/>
<path d="M8 5.5 H12 M4 7.5 H12 M4 9.5 H12 M4 11.5 H12" stroke="#959595"/></g>
<g transform="translate(19,320)"><rect x="7.3" y="1.3" width="8.4" height="8.4" fill="#109a10" stroke="#066006" stroke-width="0.7"/><path d="M8.5 8.5 V2.5 H14.5" fill="none" stroke="#60d060" stroke-width="0.8"/>
<path d="M-0.2 10.8 L4.4 5 L7 10.8 Z" fill="#1a60e0"/><circle cx="9" cy="10.9" r="4.1" fill="#f02828"/><circle cx="8" cy="9.8" r="1.5" fill="#ff7070" opacity="0.6"/></g>
<g transform="translate(19,336)"><rect x="1.5" y="1.5" width="13" height="13" fill="#fcfcfc" stroke="#9c9c9c"/><rect x="2.5" y="2.5" width="11" height="11" fill="none" stroke="#e4e4e4" stroke-width="1"/><rect x="4" y="4" width="3" height="2" fill="#f5920a"/>
<path d="M8 5.5 H12 M4 7.5 H12 M4 9.5 H12 M4 11.5 H12" stroke="#959595"/></g>
<g transform="translate(19,352)"><defs><linearGradient id="eg" x1="0" y1="0" x2="1" y2="0"><stop offset="0" stop-color="#505050"/><stop offset="0.25" stop-color="#c8c8c8"/><stop offset="0.6" stop-color="#8a8a8a"/><stop offset="1" stop-color="#6a6a6a"/></linearGradient></defs>
<rect x="3" y="0.5" width="11" height="14" fill="url(#eg)"/><rect x="3" y="0.5" width="11" height="14" fill="none" stroke="#505050" stroke-width="0.8"/>
<path d="M10.7 2 V10.8 M6.3 6 H14.9" stroke="#107a10" stroke-width="3.2"/><path d="M10.7 2.5 V10.3 M6.8 6 H14.4" stroke="#20d020" stroke-width="2"/></g>
<g transform="translate(19,368)"><defs><linearGradient id="cg" x1="0" y1="0" x2="1" y2="1"><stop offset="0" stop-color="#d8d4d8"/><stop offset="0.5" stop-color="#c4bcb8"/><stop offset="1" stop-color="#a8a098"/></linearGradient></defs>
<rect x="1" y="2" width="15" height="10" fill="url(#cg)"/><rect x="1.5" y="2.5" width="14" height="9" fill="none" stroke="#9a9088" stroke-width="1"/>
<path d="M3 4.3 H6 M6.5 4.5 H13" stroke="#6a6ab8" stroke-width="1.1"/><path d="M3 7.5 H10 M3 9.5 H9" stroke="#b8b0b8" stroke-width="0.7"/><rect x="12" y="6" width="2" height="2" fill="#f4f4e8"/><rect x="11.8" y="8.5" width="2.5" height="2.2" fill="#e03010"/></g>
<g transform="translate(19,384)"><path d="M3.5 0.5 H11 L14.5 4 V15.5 H3.5 Z" fill="url(#pg)" stroke="#5a7ac8"/><path d="M11 0.5 V4 H14.5" fill="#6a9ae8" stroke="#5a7ac8"/>
<circle cx="8.5" cy="7.5" r="3.6" fill="#e8f0fa" stroke="#5a6aa8" stroke-width="1.1"/><path d="M6 10 L2 14" stroke="#f08a20" stroke-width="2"/></g>
<g transform="translate(19,400)"><defs><linearGradient id="eg" x1="0" y1="0" x2="1" y2="0"><stop offset="0" stop-color="#505050"/><stop offset="0.25" stop-color="#c8c8c8"/><stop offset="0.6" stop-color="#8a8a8a"/><stop offset="1" stop-color="#6a6a6a"/></linearGradient></defs>
<rect x="3" y="0.5" width="11" height="14" fill="url(#eg)"/><rect x="3" y="0.5" width="11" height="14" fill="none" stroke="#505050" stroke-width="0.8"/>
<path d="M10.7 2 V10.8 M6.3 6 H14.9" stroke="#107a10" stroke-width="3.2"/><path d="M10.7 2.5 V10.3 M6.8 6 H14.4" stroke="#20d020" stroke-width="2"/></g>
<g transform="translate(19,416)"><rect x="1.5" y="1.5" width="13" height="13" fill="#fcfcfc" stroke="#9c9c9c"/><rect x="2.5" y="2.5" width="11" height="11" fill="none" stroke="#e4e4e4" stroke-width="1"/><rect x="4" y="4" width="3" height="2" fill="#f5920a"/>
<path d="M8 5.5 H12 M4 7.5 H12 M4 9.5 H12 M4 11.5 H12" stroke="#959595"/></g>
<g transform="translate(19,432)"><rect x="1.5" y="1.5" width="13" height="13" fill="#fcfcfc" stroke="#9c9c9c"/><rect x="2.5" y="2.5" width="11" height="11" fill="none" stroke="#e4e4e4" stroke-width="1"/><rect x="4" y="4" width="3" height="2" fill="#f5920a"/>
<path d="M8 5.5 H12 M4 7.5 H12 M4 9.5 H12 M4 11.5 H12" stroke="#959595"/></g>
<g transform="translate(19,448)"><defs><linearGradient id="trg" x1="0" y1="0" x2="1" y2="1"><stop offset="0" stop-color="#e4eaf0"/><stop offset="1" stop-color="#98a8b4"/></linearGradient></defs>
<rect x="0.5" y="1.5" width="9.6" height="9.5" rx="0.8" fill="url(#trg)" stroke="#6a8490" stroke-width="1"/><path d="M10 3.5 H14.5 Q15.8 3.5 15.8 5 V12 H10 Z" fill="#f0f4f8" stroke="#6a8490" stroke-width="0.9"/>
<rect x="11.4" y="5" width="2.2" height="3.6" fill="#2a70d8"/><rect x="14.2" y="8" width="1.9" height="2.2" fill="#f08a20"/><rect x="0.5" y="10.5" width="15" height="1.4" fill="#7a8a90"/>
<circle cx="3" cy="12.3" r="1.8" fill="#fff" stroke="#222" stroke-width="1"/><circle cx="12" cy="12.3" r="1.8" fill="#fff" stroke="#222" stroke-width="1"/></g>
<g transform="translate(19,464)"><rect x="1.5" y="1.5" width="13" height="13" fill="#fcfcfc" stroke="#9c9c9c"/><rect x="2.5" y="2.5" width="11" height="11" fill="none" stroke="#e4e4e4" stroke-width="1"/><rect x="4" y="4" width="3" height="2" fill="#f5920a"/>
<path d="M8 5.5 H12 M4 7.5 H12 M4 9.5 H12 M4 11.5 H12" stroke="#959595"/></g>
<g transform="translate(19,480)"><rect x="1.5" y="1.5" width="13" height="13" fill="#fcfcfc" stroke="#9c9c9c"/><rect x="2.5" y="2.5" width="11" height="11" fill="none" stroke="#e4e4e4" stroke-width="1"/><rect x="4" y="4" width="3" height="2" fill="#f5920a"/>
<path d="M8 5.5 H12 M4 7.5 H12 M4 9.5 H12 M4 11.5 H12" stroke="#959595"/></g>
</svg>
<div class="t" style="left:39px;top:2px;">Principal</div>
<div class="t" style="left:39px;top:18px;">Complemento</div>
<div class="t" style="left:39px;top:34px;">Características</div>
<div class="t" style="left:39px;top:50px;">Produção</div>
<div class="t" style="left:39px;top:66px;">Referência</div>
<div class="t" style="left:39px;top:82px;">Balança</div>
<div class="t" style="left:39px;top:98px;">Planejamento</div>
<div class="t" style="left:39px;top:114px;">Preços</div>
<div class="t" style="left:39px;top:130px;">ECF</div>
<div class="t" style="left:39px;top:146px;">Promoção</div>
<div class="t" style="left:39px;top:162px;">Faturamento</div>
<div class="t" style="left:58px;top:178px;">Tributação</div>
<div class="t" style="left:58px;top:194px;">Imposto Seletivo</div>
<div class="t" style="left:58px;top:210px;">IBS / CBS</div>
<div class="t" style="left:39px;top:226px;">Preço Região</div>
<div class="t" style="left:39px;top:242px;">Transferência</div>
<div class="t" style="left:39px;top:258px;">Fornecedores</div>
<div class="t" style="left:39px;top:274px;">Preço p/ Fornecedor</div>
<div class="t" style="left:39px;top:290px;">Restrição de Venda</div>
<div class="t" style="left:39px;top:306px;">Informações</div>
<div class="t" style="left:39px;top:322px;">Códigos de Barra</div>
<div class="t" style="left:39px;top:338px;">RAM/RCM/RAC</div>
<div class="t" style="left:39px;top:354px;">Extra</div>
<div class="t" style="left:39px;top:370px;">Fiscal</div>
<div class="t" style="left:39px;top:386px;">Movimentação</div>
<div class="t" style="left:39px;top:402px;">Localização</div>
<div class="t" style="left:39px;top:418px;">Unidade Agrupamento</div>
<div class="t" style="left:39px;top:434px;">Cartão Combustível</div>
<div class="t" style="left:39px;top:450px;">Transportadora</div>
<div class="t" style="left:39px;top:466px;">Despesa</div>
<div class="t" style="left:39px;top:482px;">Durabilidade</div>
</div>
<div class="a" style="left:150px;top:71px;width:17px;height:491px;background:repeating-conic-gradient(#fff 0 25%, #ececec 0 50%) 0 0/2px 2px;"></div>
<div class="a" style="left:150px;top:71px;width:17px;height:17px;box-sizing:border-box;border:1px solid #000;background:#f0f0f0;"></div>
<div class="a" style="left:150px;top:88px;width:17px;height:428px;box-sizing:border-box;border:1px solid #000;background:#f0f0f0;"></div>
<div class="a" style="left:150px;top:545px;width:17px;height:17px;box-sizing:border-box;border:1px solid #000;background:#f0f0f0;"></div>
<div class="a" style="left:3px;top:562px;width:147px;height:17px;background:repeating-conic-gradient(#fff 0 25%, #ececec 0 50%) 0 0/2px 2px;"></div>
<div class="a" style="left:3px;top:562px;width:17px;height:17px;box-sizing:border-box;border:1px solid #000;background:#f0f0f0;"></div>
<div class="a" style="left:20px;top:562px;width:111px;height:17px;box-sizing:border-box;border:1px solid #000;background:#f0f0f0;"></div>
<div class="a" style="left:133px;top:562px;width:17px;height:17px;box-sizing:border-box;border:1px solid #000;background:#f0f0f0;"></div>
<div class="a" style="left:150px;top:562px;width:17px;height:17px;background:#f0f0f0;"></div>
<svg style="left:0;top:0" width="200" height="581">
<path d="M153.5 82 H163.5 L158.5 77 Z" fill="#000"/>
<path d="M153.5 551 H163.5 L158.5 556 Z" fill="#000"/>
<path d="M9 570.5 L14 565.5 V575.5 Z" fill="#000"/>
<path d="M144 570.5 L139 565.5 V575.5 Z" fill="#000"/>
</svg>

<!-- form -->
<div class="t" style="left:178px;top:82px;">Código:</div>
<div class="box" style="left:255px;top:78px;width:100px;height:21px;"></div>
<div class="t" style="left:296px;top:82px;">565</div>
<div class="t" style="left:369px;top:82px;">Referência:</div>
<div class="box" style="left:430px;top:78px;width:100px;height:21px;"></div>
<div class="t" style="left:436px;top:82px;">565</div>
<div class="t" style="left:544px;top:82px;">Cód. Barras:</div>
<div class="box" style="left:607px;top:77px;width:116px;height:21px;"></div>
<div class="t" style="left:613px;top:81px;">565</div>
<div class="t" style="left:178px;top:106px;">Descrição:</div>
<div class="box" style="left:255px;top:100px;width:468px;height:21px;"></div>

<!-- outer frames -->
<div class="gl" style="left:175px;top:129px;width:552px;height:460px;border-color:#cdcdcd;"></div>
<div class="gl" style="left:179px;top:134px;width:544px;height:446px;border-color:#cdcdcd;"></div>

<div class="t" style="left:188px;top:147px;">Data de Início:</div>
<div class="box" style="left:279px;top:143px;width:125px;height:21px;"></div>
<div class="t" style="left:505px;top:147px;">UF de destino:</div>
<div class="box" style="left:584px;top:143px;width:100px;height:22px;"></div>
<svg style="left:0;top:0" width="732" height="300">
  <path d="M668.5 150.5 L674 156 L679.5 150.5" fill="none" stroke="#707070" stroke-width="1"/>
</svg>
<div class="t" style="left:188px;top:173px;">CST:</div>
<div class="box" style="left:279px;top:169px;width:50px;height:21px;"></div>
<div class="box" style="left:334px;top:169px;width:70px;height:21px;"></div>
<div class="box" style="left:409px;top:169px;width:275px;height:21px;"></div>
<div class="t" style="left:188px;top:199px;">Classe tributária:</div>
<div class="box" style="left:279px;top:195px;width:50px;height:21px;"></div>
<div class="box" style="left:334px;top:195px;width:70px;height:21px;"></div>
<div class="box" style="left:409px;top:195px;width:275px;height:21px;"></div>
<div class="a" style="left:691px;top:170px;width:21px;height:19px;box-sizing:border-box;border:1px solid #adadad;background:#e5e5e5;"></div>
<div class="a" style="left:691px;top:196px;width:21px;height:19px;box-sizing:border-box;border:1px solid #adadad;background:#e5e5e5;"></div>
<svg style="left:0;top:0" width="732" height="300">
 <g id="mag">
  <circle cx="704.5" cy="177.5" r="4.6" fill="#a8cef2" stroke="#6a7ad0" stroke-width="0.7" stroke-dasharray="1.2 1"/>
  <circle cx="705.5" cy="178.5" r="3" fill="#fff"/>
  <path d="M700.5 181.5 L695.5 186.5" stroke="#f0a030" stroke-width="2.6" stroke-linecap="round"/>
  <path d="M699.5 182.5 L696 186" stroke="#e06a10" stroke-width="1"/>
 </g>
 <use href="#mag" y="26"/>
</svg>

<div class="gl" style="left:189px;top:229px;width:524px;height:44px;"></div>
<div class="t" style="left:200px;top:223px;background:#f2f2f2;padding:0 1px 0 0;transform:scaleX(0.935);transform-origin:0 0;">IBS Estadual</div>
<div class="t" style="left:199px;top:244px;">Alíquota:</div>
<div class="box" style="left:254px;top:240px;width:80px;height:21px;"></div>
<div class="t" style="left:254px;width:76.5px;text-align:right;top:244px;">0,00</div>
<div class="t" style="left:345px;top:244px;">Per. Red. Alíq.:</div>
<div class="box" style="left:432px;top:240px;width:80px;height:21px;"></div>
<div class="t" style="left:432px;width:76.5px;text-align:right;top:244px;">0,00</div>
<div class="t" style="left:524px;top:244px;">Per. Diferimento:</div>
<div class="box" style="left:619px;top:240px;width:80px;height:21px;"></div>
<div class="t" style="left:619px;width:76.5px;text-align:right;top:244px;">0,00</div>
<div class="gl" style="left:189px;top:286px;width:524px;height:44px;"></div>
<div class="t" style="left:200px;top:280px;background:#f2f2f2;padding:0 1px 0 0;transform:scaleX(0.935);transform-origin:0 0;">IBS Municipal</div>
<div class="t" style="left:199px;top:301px;">Alíquota:</div>
<div class="box" style="left:254px;top:297px;width:80px;height:21px;"></div>
<div class="t" style="left:254px;width:76.5px;text-align:right;top:301px;">0,00</div>
<div class="t" style="left:345px;top:301px;">Per. Red. Alíq.:</div>
<div class="box" style="left:432px;top:297px;width:80px;height:21px;"></div>
<div class="t" style="left:432px;width:76.5px;text-align:right;top:301px;">0,00</div>
<div class="t" style="left:524px;top:301px;">Per. Diferimento:</div>
<div class="box" style="left:619px;top:297px;width:80px;height:21px;"></div>
<div class="t" style="left:619px;width:76.5px;text-align:right;top:301px;">0,00</div>
<div class="gl" style="left:189px;top:343px;width:524px;height:44px;"></div>
<div class="t" style="left:200px;top:337px;background:#f2f2f2;padding:0 1px 0 0;transform:scaleX(0.935);transform-origin:0 0;">CBS</div>
<div class="t" style="left:199px;top:358px;">Alíquota:</div>
<div class="box" style="left:254px;top:354px;width:80px;height:21px;"></div>
<div class="t" style="left:254px;width:76.5px;text-align:right;top:358px;">0,00</div>
<div class="t" style="left:345px;top:358px;">Per. Red. Alíq.:</div>
<div class="box" style="left:432px;top:354px;width:80px;height:21px;"></div>
<div class="t" style="left:432px;width:76.5px;text-align:right;top:358px;">0,00</div>
<div class="t" style="left:524px;top:358px;">Per. Diferimento:</div>
<div class="box" style="left:619px;top:354px;width:80px;height:21px;"></div>
<div class="t" style="left:619px;width:76.5px;text-align:right;top:358px;">0,00</div>

<!-- grid -->
<div class="a" style="left:190px;top:422px;width:23px;height:19px;box-sizing:border-box;border:1px solid #c4c4c4;background:#e4e4e4;"></div>
<div class="a" style="left:189px;top:447px;width:25px;height:25px;box-sizing:border-box;border:1px solid #d0d0d0;background:#e4e4e4;"></div>
<svg style="left:0;top:0" width="732" height="581">
  <path d="M195.5 432.5 H208.5 M202 426 V439" stroke="#2a9a2a" stroke-width="4"/>
  <path d="M196.5 432.5 H207.5 M202 427 V438" stroke="#58d058" stroke-width="2"/>
  <rect x="195" y="457" width="14" height="5" rx="2" fill="#6a6a6a"/>
  <rect x="196" y="458" width="12" height="3" rx="1" fill="#a8a8a8"/>
</svg>
<div class="a" style="left:219px;top:421px;width:494px;height:147px;box-sizing:border-box;border:1px solid #0c2a98;background:#fff;"></div>
<div class="a" style="left:220px;top:422px;width:492px;height:18px;background:#b5cdf0;"></div>
<div class="a" style="left:220px;top:440px;width:492px;height:1px;background:#88a0d0;"></div>
<div class="a" style="left:339px;top:424px;width:1px;height:15px;background:#7f90b8;"></div>
<div class="a" style="left:340px;top:424px;width:1px;height:15px;background:#fff;"></div>
<div class="a" style="left:399px;top:424px;width:1px;height:15px;background:#7f90b8;"></div>
<div class="a" style="left:400px;top:424px;width:1px;height:15px;background:#fff;"></div>
<div class="a" style="left:459px;top:424px;width:1px;height:15px;background:#7f90b8;"></div>
<div class="a" style="left:460px;top:424px;width:1px;height:15px;background:#fff;"></div>
<div class="a" style="left:540px;top:424px;width:1px;height:15px;background:#7f90b8;"></div>
<div class="a" style="left:541px;top:424px;width:1px;height:15px;background:#fff;"></div>
<div class="a" style="left:605px;top:424px;width:1px;height:15px;background:#7f90b8;"></div>
<div class="a" style="left:606px;top:424px;width:1px;height:15px;background:#fff;"></div>
<div class="a" style="left:669px;top:424px;width:1px;height:15px;background:#7f90b8;"></div>
<div class="a" style="left:670px;top:424px;width:1px;height:15px;background:#fff;"></div>
<div class="a" style="left:220px;top:422px;width:492px;height:18px;overflow:hidden;">
<div class="t" style="left:2px;top:4px;">Data de Início</div>
<div class="t" style="left:122px;top:4px;">UF</div>
<div class="t" style="left:182px;top:4px;">CST</div>
<div class="t" style="left:243px;top:4px;">Class. Trib.</div>
<div class="t" style="left:323px;top:4px;">Alíq. CBS</div>
<div class="t" style="left:388px;top:4px;">Red. CBS</div>
<div class="t" style="left:452px;top:4px;">Dif. CBS</div>
</div>
<div class="t" style="left:415px;top:498px;color:#808080;">&lt;No data to display&gt;</div>

</body></html>
